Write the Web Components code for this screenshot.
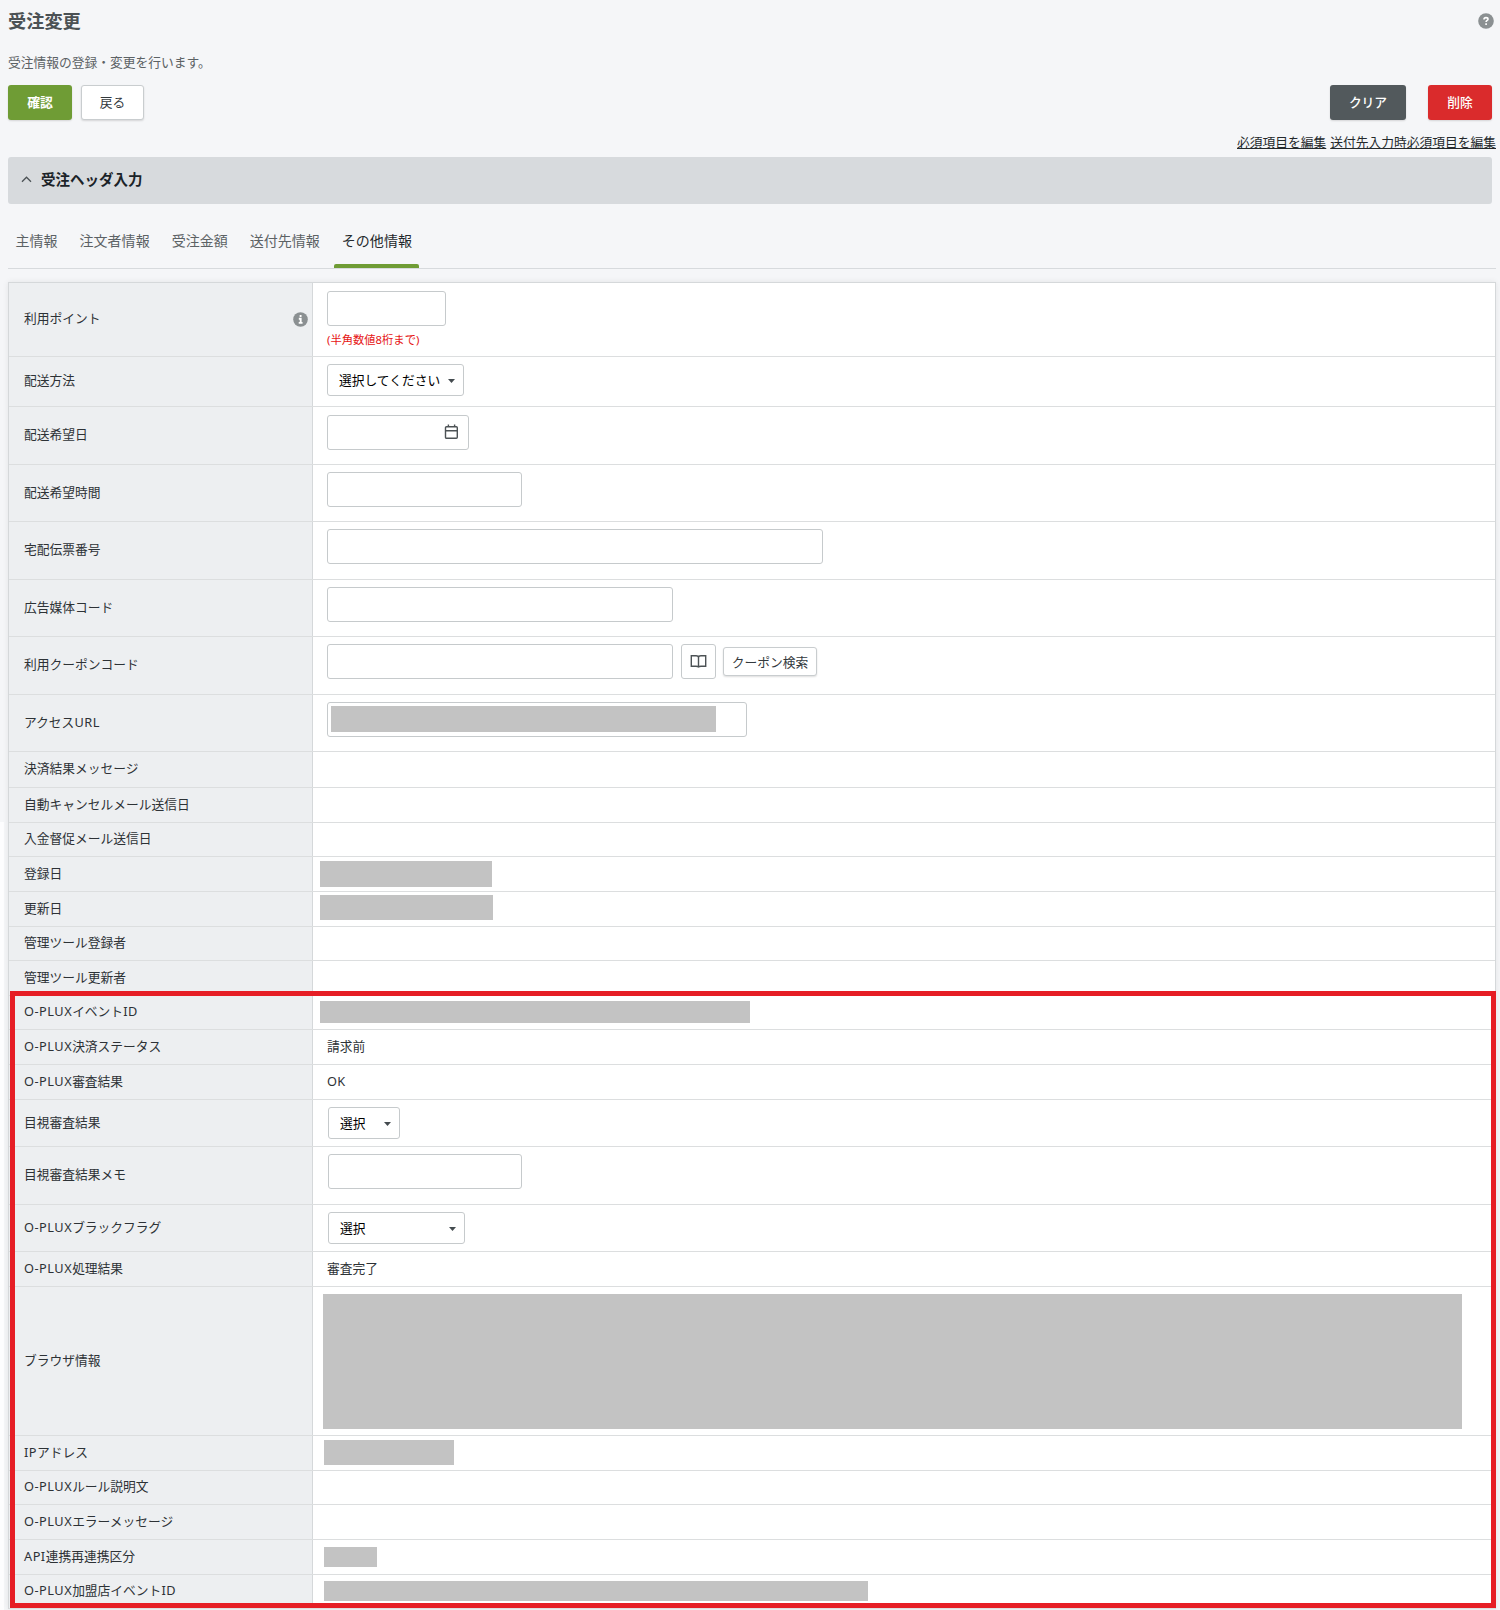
<!DOCTYPE html>
<html lang="ja">
<head>
<meta charset="utf-8">
<title>受注変更</title>
<style>
html{background:#f5f6f8}
body{margin:0;width:1500px;height:1610px;overflow:hidden;font-family:"Noto Sans","Noto Sans CJK JP",sans-serif;font-size:12.75px;line-height:20px;color:#2d3236}
</style>
</head>
<body>
<order-page></order-page>
<script>
const define = (name, html, setup) => customElements.define(name, class extends HTMLElement {
  constructor() {
    super();
    this.attachShadow({ mode: 'open' }).innerHTML = html;
  }
  connectedCallback() {
    const a = n => this.getAttribute(n);
    if (setup) setup(this, a, this.shadowRoot);
  }
});
const px = (el, a, names) => names.forEach(n => { if (a(n)) el.style.setProperty('--' + n, a(n) + 'px'); });

define('app-button', `
<style>
:host{display:block}
button{all:unset;box-sizing:border-box;display:flex;align-items:center;justify-content:center;width:var(--w);height:var(--h,35px);padding-bottom:var(--pb,2px);border-radius:3px;font-size:12.75px;line-height:20px;box-shadow:0 1px 2px #0002}
:host([kind=primary]) button{background:#6f9c35;color:#fff;font-weight:700}
:host([kind=plain]) button{background:#fff;border:1px solid #c9cdcf;color:#33393d}
:host([kind=dark]) button{background:#52595c;color:#fff;font-weight:500}
:host([kind=danger]) button{background:#da2b2c;color:#fff;font-weight:500}
</style><button><slot></slot></button>`, (el, a) => px(el, a, ['w', 'h', 'pb']));

define('text-field', `
<style>
:host{display:block}
div{box-sizing:border-box;display:flex;align-items:flex-start;justify-content:flex-end;width:var(--w);height:35px;border:1px solid #c6cacc;border-radius:3px;background:#fff}
::slotted(*){flex:none}
</style><div><slot></slot></div>`, (el, a) => px(el, a, ['w']));

define('select-box', `
<style>
:host{display:block}
div{box-sizing:border-box;display:flex;align-items:center;justify-content:space-between;width:var(--w);height:32px;border:1px solid #c6cacc;border-radius:3px;background:#fff;padding:0 8px 0 11px;color:#000}
svg{display:block;margin-top:2px}
</style><div><span><slot></slot></span><svg width="7" height="4" viewBox="0 0 7 4"><path d="M0 0h7L3.5 4z" fill="#444b4f"/></svg></div>`, (el, a) => px(el, a, ['w']));

define('redacted-block', `
<style>
:host{display:block;width:var(--w);height:var(--h);margin-top:var(--mt,0);margin-right:var(--mr,0);background:#c3c3c3}
</style>`, (el, a) => px(el, a, ['w', 'h', 'mt', 'mr']));

define('form-row', `
<style>
:host{display:flex;box-sizing:border-box;height:var(--h);border-bottom:1px solid #dcdedf}
.label{box-sizing:border-box;width:304px;flex:none;display:flex;align-items:center;justify-content:space-between;background:#edeff1;border-right:1px solid #d5d8da;padding:0 4px 0 15px}
.text{padding-bottom:3px}
.latin{letter-spacing:.5px}
.value{flex:1;display:flex;align-items:flex-start;padding:var(--pt,7px) 0 0 var(--pl,14px);gap:8px;overflow:hidden}
</style>
<div class="label"><span class="text"></span><slot name="hint"></slot></div>
<div class="value"><slot></slot></div>`, (el, a, root) => {
  px(el, a, ['h', 'pt', 'pl']);
  root.querySelector('.text').innerHTML = a('label').replace(/[A-Z-]+/g, '<span class="latin">$&</span>');
});

define('form-table', `
<style>
:host{display:block;box-sizing:border-box;width:1488px;border:1px solid #d5d8da;border-bottom:0;background:#fff;box-shadow:0 0 6px #00000014}
</style><slot></slot>`);

define('round-mark', `
<style>:host{display:block}svg{display:block}</style>
<svg viewBox="0 0 16 16"><circle cx="8" cy="8" r="7.8" fill="#8b9092"/><path fill="none" stroke="#fff"/></svg>`, (el, a, root) => {
  const s = root.querySelector('svg'), p = root.querySelector('path');
  s.setAttribute('width', a('size')); s.setAttribute('height', a('size'));
  if (a('kind') === 'help') {
    p.setAttribute('d', 'M6 6.5Q6 4.6 8 4.6T10 6.2C10 7.5 8.1 7.4 8.1 9M8.1 10.2V11.9');
    p.setAttribute('stroke-width', '1.6');
  } else {
    p.setAttribute('d', 'M8.1 3.3V5.4M6.2 7.2H8.2V11.6M6.1 11.6H10.2');
    p.setAttribute('stroke-width', '2');
  }
});

define('calendar-icon', `
<style>:host{display:block;margin:8px 9px 0 0}svg{display:block}</style>
<svg width="15" height="16" viewBox="0 0 15 16" fill="none" stroke="#4c5255" stroke-width="1.4"><rect x="1.5" y="2.7" width="11.8" height="11.6" rx="1"/><path d="M1.5 6.8H13.3M4.4 .6V3M10.6 .6V3"/></svg>`);

define('book-button', `
<style>
:host{display:block}
button{all:unset;box-sizing:border-box;width:35px;height:35px;border:1px solid #c6cacc;border-radius:3px;background:#fff;display:flex;align-items:center;justify-content:center}
</style><button><svg width="17" height="15" viewBox="0 0 17 15" fill="none" stroke="#4c5255" stroke-width="1.4"><path d="M8.5 12.9C7.8 12.3 7 12.2 6 12.2H1.3V1.7H6C7.4 1.7 8.5 2.2 8.5 3.4C8.5 2.2 9.6 1.7 11 1.7H15.7V12.2H11C10 12.2 9.2 12.3 8.5 12.9ZM8.5 3.2V13.2"/></svg></button>`);

define('page-head', `
<style>
:host{display:flex;flex-direction:column;padding:0 8px}
h1{margin:0;font-size:18.2px;line-height:26px;color:#4b5154}
.top{display:flex;justify-content:space-between;align-items:center;height:41px}
.desc{height:20px;margin-top:11px;color:#5c6265}
.actions{display:flex;justify-content:space-between;margin-top:13px}
.actions div{display:flex}
.left{gap:9px}.right{gap:22px}
.links{display:flex;justify-content:flex-end;gap:4px;margin:12px -4px 0 0;height:25px;color:#24292c;text-decoration:underline}
</style>
<div class="top"><h1>受注変更</h1><round-mark kind="help" size="16" style="margin-right:-2px"></round-mark></div>
<div class="desc">受注情報の登録・変更を行います。</div>
<div class="actions"><div class="left"><app-button kind="primary" w="64">確認</app-button><app-button kind="plain" w="63">戻る</app-button></div>
<div class="right"><app-button kind="dark" w="76">クリア</app-button><app-button kind="danger" w="64">削除</app-button></div></div>
<div class="links"><span>必須項目を編集</span><span>送付先入力時必須項目を編集</span></div>`);

define('section-bar', `
<style>
:host{display:flex;box-sizing:border-box;align-items:center;gap:9px;height:47px;margin:0 8px;padding:0 13px 2px;background:#d7dadd;border-radius:3px;font-size:14.5px;font-weight:700;color:#1b2328}
span{padding-bottom:2px}
</style><svg width="11" height="7" viewBox="0 0 11 7" fill="none" stroke="#4c5255" stroke-width="1.3"><path d="M1 5.7L5.5 1.2L10 5.7"/></svg><span><slot></slot></span>`);

define('tab-item', `
<style>
:host{display:flex;box-sizing:border-box;padding:26px 7.5px 0;height:64px;font-size:14.03px;line-height:22px;color:#5c6265}
:host([active]){color:#24292c}
:host([active])::after{content:"";align-self:flex-end;height:4px;width:85px;margin:0 -7.5px 0 -77.7px;background:#6f9c35;border-radius:2px 2px 0 0}
</style><slot></slot>`);
define('tab-bar', `
<style>:host{display:flex;gap:7px;height:64px;margin:0 4px 0 8px;border-bottom:1px solid #d7dadd}</style><slot></slot>`);

define('highlight-frame', `
<style>:host{position:absolute;left:10px;top:991px;box-sizing:border-box;width:1486px;height:617px;border:5px solid #e61e25;pointer-events:none}</style>`);

define('order-page', `
<style>
:host{display:block;position:relative;height:1610px;background:linear-gradient(#fdfdfe,#fdfdfe) 0 822px/4px 800px no-repeat}
form-table{margin:13px 0 0 8px}
.note{color:#e61414;font-size:11.3px;line-height:18px}
.stack{display:flex;flex-direction:column;gap:5px}
form-row > span{margin-top:-1px}
</style>
<page-head></page-head>
<section-bar>受注ヘッダ入力</section-bar>
<tab-bar><tab-item>主情報</tab-item><tab-item>注文者情報</tab-item><tab-item>受注金額</tab-item><tab-item>送付先情報</tab-item><tab-item active>その他情報</tab-item></tab-bar>
<form-table>
<form-row label="利用ポイント" h="74" pt="8"><round-mark slot="hint" kind="info" size="15"></round-mark><div class="stack"><text-field w="119"></text-field><span class="note">(半角数値8桁まで)</span></div></form-row>
<form-row label="配送方法" h="50"><select-box w="137">選択してください</select-box></form-row>
<form-row label="配送希望日" h="58" pt="8"><text-field w="142"><calendar-icon></calendar-icon></text-field></form-row>
<form-row label="配送希望時間" h="57"><text-field w="195"></text-field></form-row>
<form-row label="宅配伝票番号" h="58"><text-field w="496"></text-field></form-row>
<form-row label="広告媒体コード" h="57"><text-field w="346"></text-field></form-row>
<form-row label="利用クーポンコード" h="58"><text-field w="346"></text-field><book-button></book-button><app-button kind="plain" w="94" h="29" pb="0" style="margin:3px 0 0 -1px">クーポン検索</app-button></form-row>
<form-row label="アクセスURL" h="57"><text-field w="420"><redacted-block w="385" h="26" mt="3" mr="30"></redacted-block></text-field></form-row>
<form-row label="決済結果メッセージ" h="36"></form-row>
<form-row label="自動キャンセルメール送信日" h="35"></form-row>
<form-row label="入金督促メール送信日" h="34"></form-row>
<form-row label="登録日" h="35" pt="4" pl="7"><redacted-block w="172" h="26"></redacted-block></form-row>
<form-row label="更新日" h="35" pt="3" pl="7"><redacted-block w="173" h="25"></redacted-block></form-row>
<form-row label="管理ツール登録者" h="34"></form-row>
<form-row label="管理ツール更新者" h="35"></form-row>
<form-row label="O-PLUXイベントID" h="34" pt="5" pl="7"><redacted-block w="430" h="22"></redacted-block></form-row>
<form-row label="O-PLUX決済ステータス" h="35"><span>請求前</span></form-row>
<form-row label="O-PLUX審査結果" h="35"><span style="letter-spacing:.4px">OK</span></form-row>
<form-row label="目視審査結果" h="47" pl="15"><select-box w="72">選択</select-box></form-row>
<form-row label="目視審査結果メモ" h="58" pl="15"><text-field w="194"></text-field></form-row>
<form-row label="O-PLUXブラックフラグ" h="47" pl="15"><select-box w="137">選択</select-box></form-row>
<form-row label="O-PLUX処理結果" h="35"><span>審査完了</span></form-row>
<form-row label="ブラウザ情報" h="149" pl="10"><redacted-block w="1139" h="135"></redacted-block></form-row>
<form-row label="IPアドレス" h="35" pt="4" pl="11"><redacted-block w="130" h="25"></redacted-block></form-row>
<form-row label="O-PLUXルール説明文" h="34"></form-row>
<form-row label="O-PLUXエラーメッセージ" h="35"></form-row>
<form-row label="API連携再連携区分" h="35" pt="7" pl="11"><redacted-block w="53" h="20"></redacted-block></form-row>
<form-row label="O-PLUX加盟店イベントID" h="34" pt="6" pl="11"><redacted-block w="544" h="20"></redacted-block></form-row>
</form-table>
<highlight-frame></highlight-frame>`);
</script>
</body>
</html>
